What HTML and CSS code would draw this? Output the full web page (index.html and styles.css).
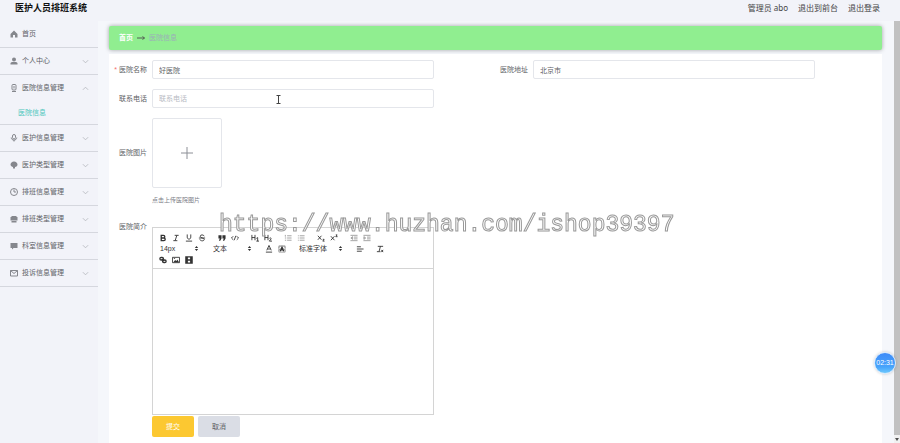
FILE: index.html
```html
<!DOCTYPE html>
<html lang="zh-CN">
<head>
    <meta charset="UTF-8">
    <meta name="viewport" content="width=device-width, initial-scale=1.0">
    <title>医护人员排班系统</title>
    <link rel="stylesheet" href="styles.css">
</head>
<body>
    <svg class="defs" width="0" height="0">
        <symbol id="down" viewBox="0 0 8 8"><path d="M1 2.5l3 3 3-3"/></symbol>
        <symbol id="updown" viewBox="0 0 6 8"><path d="M1 3.3L3 1l2 2.3zM1 4.7L3 7l2-2.3z"/></symbol>
    </svg>

    <header class="header">
        <h1>医护人员排班系统</h1>
        <nav class="header-links">
            <span>管理员 abo</span>
            <a href="#">退出到前台</a>
            <a href="#">退出登录</a>
        </nav>
    </header>

    <div class="layout">
        <nav class="sidebar">
            <ul>
                <li><a class="item" href="#">
                    <svg class="icon" viewBox="0 0 16 16"><path class="fill" d="M8 1L1 8v7h5v-5h4v5h5V8z"/></svg>
                    <span>首页</span>
                </a></li>
                <li><a class="item" href="#">
                    <svg class="icon" viewBox="0 0 16 16"><circle class="fill" cx="8" cy="5" r="4"/><path class="fill" d="M1 15v-2c0-3 3-3 5-3h4c2 0 5 0 5 3v2z"/></svg>
                    <span>个人中心</span>
                    <svg class="chevron"><use href="#down"/></svg>
                </a></li>
                <li>
                    <a class="item open" href="#">
                        <svg class="icon" viewBox="0 0 16 16"><rect x="4" y="1" width="8" height="11" rx="2"/><path d="M8 4v5M4 15h8"/></svg>
                        <span>医院信息管理</span>
                        <svg class="chevron"><use href="#down"/></svg>
                    </a>
                    <a class="sub-item" href="#">医院信息</a>
                </li>
                <li><a class="item" href="#">
                    <svg class="icon" viewBox="0 0 16 16"><rect x="5" y="1" width="6" height="9" rx="3"/><path d="M2.500 7c0 7 11 7 11 0M8 12v3"/></svg>
                    <span>医护信息管理</span>
                    <svg class="chevron"><use href="#down"/></svg>
                </a></li>
                <li><a class="item" href="#">
                    <svg class="icon" viewBox="0 0 16 16"><path class="fill" d="M8 1C4 1 1 4 1 7s3 5 5 5v3h4v-3c3 0 5-2 5-5s-3-6-7-6z"/></svg>
                    <span>医护类型管理</span>
                    <svg class="chevron"><use href="#down"/></svg>
                </a></li>
                <li><a class="item" href="#">
                    <svg class="icon" viewBox="0 0 16 16"><circle cx="8" cy="8" r="7"/><path d="M8 3v5h4"/></svg>
                    <span>排班信息管理</span>
                    <svg class="chevron"><use href="#down"/></svg>
                </a></li>
                <li><a class="item" href="#">
                    <svg class="icon" viewBox="0 0 16 16"><path class="fill" d="M3 2h10v2h2v7H1V4h2zM3 12h10v3H3z"/></svg>
                    <span>排班类型管理</span>
                    <svg class="chevron"><use href="#down"/></svg>
                </a></li>
                <li><a class="item" href="#">
                    <svg class="icon" viewBox="0 0 16 16"><path class="fill" d="M1 2h14v10H7l-3 3v-3H1z"/></svg>
                    <span>科室信息管理</span>
                    <svg class="chevron"><use href="#down"/></svg>
                </a></li>
                <li><a class="item" href="#">
                    <svg class="icon" viewBox="0 0 16 16"><path d="M1 3h14v11H1zM1 3l7 6 7-6"/></svg>
                    <span>投诉信息管理</span>
                    <svg class="chevron"><use href="#down"/></svg>
                </a></li>
            </ul>
        </nav>

        <main class="main">
            <div class="breadcrumb">
                <a href="#">首页</a>
                <svg viewBox="0 0 16 8"><path d="M0 4h15M11 1l4 3-4 3"/></svg>
                <span>医院信息</span>
            </div>

            <form class="form">
                <div class="field">
                    <label class="required" for="name">医院名称</label>
                    <input class="control" id="name" type="text" value="好医院">
                </div>
                <div class="field">
                    <label for="address">医院地址</label>
                    <input class="control" id="address" type="text" value="北京市">
                </div>
                <div class="field wide">
                    <label for="phone">联系电话</label>
                    <input class="control" id="phone" type="text" placeholder="联系电话">
                </div>
                <div class="field wide">
                    <label for="upload">医院图片</label>
                    <button class="upload" id="upload" type="button" aria-label="上传">
                        <svg viewBox="0 0 12 12"><path d="M6 0v12M0 6h12"/></svg>
                    </button>
                </div>
                <p class="tip wide">点击上传医院图片</p>
                <div class="field wide top">
                    <label for="intro">医院简介</label>
                    <div class="editor">
                        <div class="toolbar">
                            <div class="tools">
                                <span class="group">
                                    <button type="button" aria-label="粗体"><svg viewBox="0 0 18 18"><path class="bold" d="M5 3h5a3 3 0 010 6H5zM5 9h6a3 3 0 010 6H5z"/></svg></button>
                                    <button type="button" aria-label="斜体"><svg viewBox="0 0 18 18"><path d="M6 3h9M3 15h9M11 3L7 15"/></svg></button>
                                    <button type="button" aria-label="下划线"><svg viewBox="0 0 18 18"><path d="M5 1v6c0 6 8 6 8 0V1M2 16h14"/></svg></button>
                                    <button type="button" aria-label="删除线"><svg viewBox="0 0 18 18"><path d="M14 5c-1-4-9-4-9 0 0 5 9 3 9 7 0 5-9 4-10 0M2 9h14"/></svg></button>
                                </span>
                                <span class="group">
                                    <button type="button" aria-label="引用"><svg viewBox="0 0 18 18"><path class="solid" d="M1 3h7v7l-3 5H2l2-5H1zM10 3h7v7l-3 5h-3l2-5h-3z"/></svg></button>
                                    <button type="button" aria-label="代码"><svg viewBox="0 0 18 18"><path d="M5 5L1 9l4 4M13 5l4 4-4 4M11 4L7 14"/></svg></button>
                                </span>
                                <span class="group">
                                    <button type="button" aria-label="标题一"><svg viewBox="0 0 18 18"><path d="M2 2v12M9 2v12M2 8h7M12 10l3-2v8M12 16h6"/></svg></button>
                                    <button type="button" aria-label="标题二"><svg viewBox="0 0 18 18"><path d="M2 2v12M9 2v12M2 8h7M12 10c1-2 5-1 4 1l-4 5h6"/></svg></button>
                                </span>
                                <span class="group">
                                    <button type="button" aria-label="有序列表"><svg class="thin" viewBox="0 0 18 18"><path d="M7 4h10M7 9h10M7 14h10M3 2v4M2 9h3M2 14h3"/></svg></button>
                                    <button type="button" aria-label="无序列表"><svg class="thin" viewBox="0 0 18 18"><path d="M6 4h11M6 9h11M6 14h11M2 4h2M2 9h2M2 14h2"/></svg></button>
                                </span>
                                <span class="group">
                                    <button type="button" aria-label="下标"><svg viewBox="0 0 18 18"><path d="M2 4l8 9M10 4l-8 9M13 12h3l-3 4h4"/></svg></button>
                                    <button type="button" aria-label="上标"><svg viewBox="0 0 18 18"><path d="M2 5l8 9M10 5l-8 9M13 2h3l-3 4h4"/></svg></button>
                                </span>
                                <span class="group">
                                    <button type="button" aria-label="减少缩进"><svg class="thin" viewBox="0 0 18 18"><path d="M1 3h16M9 7h8M9 11h8M1 15h16M6 6v6L2 9z"/></svg></button>
                                    <button type="button" aria-label="增加缩进"><svg class="thin" viewBox="0 0 18 18"><path d="M1 3h16M9 7h8M9 11h8M1 15h16M2 6v6l4-3z"/></svg></button>
                                </span>
                            </div>
                            <div class="tools">
                                <span class="picker">
                                    <select aria-label="字号"><option>14px</option></select>
                                    <svg><use href="#updown"/></svg>
                                </span>
                                <span class="picker">
                                    <select aria-label="段落"><option>文本</option></select>
                                    <svg><use href="#updown"/></svg>
                                </span>
                                <span class="group">
                                    <button type="button" aria-label="文字颜色"><svg viewBox="0 0 18 18"><path d="M4 12L9 1l5 11M6 9h6M2 16h14"/></svg></button>
                                    <button type="button" aria-label="背景颜色"><svg class="thin" viewBox="0 0 18 18"><path d="M2 2h14v14H2zM2 6l4-4M2 12l4-4M12 2l4 4M12 8l4 4"/><path class="bold" d="M5 14L9 5l4 9M6 11h6"/></svg></button>
                                </span>
                                <span class="picker font">
                                    <select aria-label="字体"><option>标准字体</option></select>
                                    <svg><use href="#updown"/></svg>
                                </span>
                                <span class="group">
                                    <button type="button" aria-label="对齐"><svg viewBox="0 0 18 18"><path d="M2 4h9M2 9h15M2 14h11"/></svg></button>
                                </span>
                                <span class="group">
                                    <button type="button" aria-label="清除格式"><svg viewBox="0 0 18 18"><path d="M4 3h12M10 3L7 14M2 15h8M12 11l4 5M16 11l-4 5"/></svg></button>
                                </span>
                            </div>
                            <div class="tools">
                                <span class="group">
                                    <button type="button" aria-label="链接"><svg class="bold" viewBox="0 0 18 18"><rect x="2" y="3" width="8" height="6" rx="3"/><rect x="8" y="9" width="8" height="6" rx="3"/><path d="M6 6l6 6"/></svg></button>
                                    <button type="button" aria-label="图片"><svg viewBox="0 0 18 18"><path d="M1 3h16v12H1z"/><path class="solid" d="M3 14l4-5 3 2 2-3 4 6zM4 5h3v2H4z"/></svg></button>
                                    <button type="button" aria-label="视频"><svg class="bold" viewBox="0 0 18 18"><path d="M2 2h14v14H2zM5 2v14M13 2v14M5 9h8"/></svg></button>
                                </span>
                            </div>
                        </div>
                        <textarea id="intro"></textarea>
                    </div>
                </div>
                <div class="actions wide">
                    <button class="submit" type="submit">提交</button>
                    <button class="cancel" type="button">取消</button>
                </div>
            </form>
        </main>

        <div class="scrollbar"><div class="thumb"></div><svg viewBox="0 0 6 6"><path d="M1 2h4L3 5z"/></svg></div>
    </div>

    <svg class="cursor" viewBox="0 0 5 9"><path d="M0.500 0.500h4M0.500 8.500h4M2.500 0.500v8"/></svg>
    <div class="watermark">https://www.huzhan.com/ishop39397</div>
    <div class="timer">02:31</div>
</body>
</html>
```

FILE: styles.css
```css
* {
    box-sizing: border-box;
}

body {
    margin: 0;
    min-height: 100vh;
    display: flex;
    flex-direction: column;
    position: relative;
    background-color: #f5f7fb;
    color: #606266;
    font-family: "Liberation Sans", "Noto Sans CJK SC", sans-serif;
    font-size: 7px;
    line-height: 10px;
}

a {
    color: inherit;
    text-decoration: none;
}

button,
input,
select,
textarea {
    font: inherit;
    color: inherit;
}

svg {
    fill: none;
    stroke: currentColor;
}

.defs {
    position: absolute;
}

.header {
    display: flex;
    justify-content: space-between;
    height: 21px;
    padding: 0 20px 0 15px;
    background-color: #f2f3f9;
}

.header h1 {
    margin: 0;
    color: #111;
    font-size: 9px;
    line-height: 16px;
}

.header-links {
    display: flex;
    gap: 10px;
    color: #444;
    font-family: "Noto Sans", "Noto Sans CJK SC", sans-serif;
    font-size: 8px;
    line-height: 16px;
}

.layout {
    display: flex;
    flex: 1;
}

/* Sidebar */
.sidebar {
    width: 98px;
    background-color: #f2f3f9;
}

.sidebar ul {
    margin: 0;
    padding: 0;
    list-style: none;
}

.sidebar li {
    border-bottom: 1px solid #d5d7de;
}

.item {
    display: flex;
    align-items: center;
    gap: 4px;
    height: 26px;
    padding: 0 9px 0 10px;
}

.icon {
    width: 8px;
    height: 8px;
    color: #85878d;
    stroke-width: 2;
}

.icon .fill {
    fill: currentColor;
    stroke: none;
}

.chevron {
    width: 7px;
    height: 7px;
    margin-left: auto;
    color: #b8bac0;
}

.open .chevron {
    transform: rotate(180deg);
}

.sub-item {
    display: block;
    padding-left: 18px;
    color: #50c7bd;
    line-height: 23px;
}

/* Content */
.main {
    flex: 1;
    display: flex;
    flex-direction: column;
    padding: 5px 12px 0 11px;
}

.breadcrumb {
    display: flex;
    align-items: center;
    gap: 4px;
    height: 24px;
    padding: 0 10px;
    border-radius: 2px;
    background-color: #90ee90;
    box-shadow: 0 0 4px rgba(0, 0, 0, 0.35);
    color: #9cb0b8;
}

.breadcrumb a {
    color: #fff;
    font-weight: bold;
}

.breadcrumb svg {
    width: 8px;
    height: 6px;
    color: #556055;
    stroke-width: 2;
}

.form {
    flex: 1;
    display: grid;
    grid-template-columns: 1fr 1fr;
    grid-auto-rows: max-content;
    align-content: start;
    row-gap: 10px;
    margin-top: 4px;
    padding: 6px 11px 0 0;
    background-color: #fff;
}

.wide {
    grid-column: 1 / -1;
}

.field {
    display: flex;
    align-items: center;
}

.field label {
    width: 38px;
    margin-right: 5px;
    text-align: right;
    white-space: nowrap;
}

.required::before {
    content: "* ";
    color: #f56c6c;
}

.control {
    width: 74%;
    height: 19px;
    padding: 0 6px;
    border: 1px solid #e4e6eb;
    border-radius: 2px;
    background-color: #fff;
}

.wide .control,
.editor {
    width: 37%;
}

.control::placeholder {
    color: #b8bbc3;
}

.upload {
    display: flex;
    align-items: center;
    justify-content: center;
    width: 70px;
    height: 70px;
    border: 1px solid #e4e6eb;
    border-radius: 2px;
    background-color: #fff;
    color: #8c8f96;
}

.upload svg {
    width: 12px;
    height: 12px;
}

.tip {
    margin: -3px 0 0 43px;
    color: #7d8088;
    font-size: 6px;
}

.top {
    align-items: flex-start;
    padding-top: 12px;
}

.top label {
    margin-top: -5px;
}

.editor {
    border: 1px solid #d4d4d4;
}

.toolbar {
    padding: 4px 3px 3px;
    border-bottom: 1px solid #d4d4d4;
    color: #333;
}

.tools {
    display: flex;
    gap: 7px;
    height: 11px;
}

.group {
    display: flex;
}

.group button {
    display: flex;
    align-items: center;
    justify-content: center;
    width: 13px;
    height: 11px;
    padding: 0;
    border: 0;
    background: none;
}

.group svg {
    width: 8px;
    height: 8px;
    stroke-width: 2;
}

.group .thin {
    stroke-width: 1;
}

.group .bold {
    stroke-width: 3;
}

.group .solid {
    fill: currentColor;
    stroke: none;
}

.picker {
    display: flex;
    align-items: center;
    width: 46px;
    padding: 0 3px 0 4px;
}

.picker.font {
    width: 51px;
}

.picker select {
    flex: 1;
    min-width: 0;
    padding: 0;
    border: 0;
    background: none;
    appearance: none;
}

.picker svg {
    width: 5px;
    height: 7px;
    fill: currentColor;
    stroke: none;
}

.editor textarea {
    display: block;
    width: 100%;
    height: 145px;
    padding: 6px;
    border: 0;
    outline: none;
    resize: none;
}

.actions {
    display: flex;
    gap: 4px;
    margin: -9px 0 0 43px;
}

.actions button {
    width: 42px;
    height: 21px;
    padding: 0;
    border: 0;
    border-radius: 2px;
}

.actions .submit {
    background-color: #fcc831;
    color: #fff;
}

.actions .cancel {
    background-color: #dadde5;
}

.scrollbar {
    display: flex;
    flex-direction: column;
    width: 6px;
    background-color: #f1f1f1;
}

.thumb {
    flex: 1;
    background-color: #c1c1c1;
}

.scrollbar svg {
    width: 6px;
    height: 8px;
    fill: #505050;
    stroke: none;
}

/* Overlays */
.cursor {
    position: absolute;
    top: 95px;
    left: 276px;
    width: 5px;
    height: 9px;
    color: #444;
}

.watermark {
    position: absolute;
    top: 211px;
    left: 219px;
    color: #fff;
    font-family: "Liberation Mono", monospace;
    font-size: 23px;
    line-height: 28px;
    -webkit-text-stroke: 1px #999;
    will-change: transform;
    pointer-events: none;
}

.timer {
    position: absolute;
    top: 352px;
    right: 4px;
    width: 22px;
    height: 22px;
    border: 1px solid #d5e8fb;
    border-radius: 50%;
    background: linear-gradient(#3d8bf8, #48a4fb 70%, #6cc8fd);
    box-shadow: 0 0 3px rgba(0, 0, 0, 0.2);
    color: #fff;
    line-height: 20px;
    text-align: center;
}
```
